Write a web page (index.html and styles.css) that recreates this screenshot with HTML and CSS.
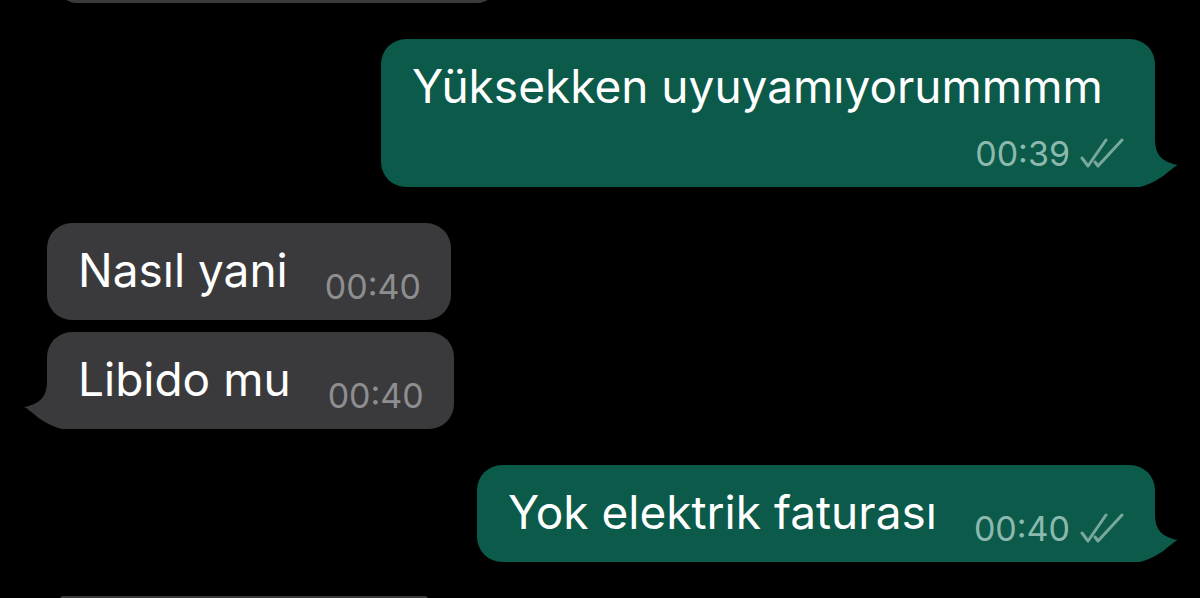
FILE: index.html
```html
<!DOCTYPE html>
<html lang="tr">

<head>
    <meta charset="UTF-8">
    <meta name="viewport" content="width=device-width, initial-scale=1.0">
    <title>Sohbet</title>
    <link rel="stylesheet" href="styles.css">
</head>

<body>
    <div class="chat">
        <!-- previous message, cut off at the top -->
        <div class="bubble in cut-top"></div>

        <div class="bubble out">
            <span class="text">Yüksekken uyuyamıyorummmm</span>
            <span class="meta">
                <span class="time">00:39</span>
                <svg class="ticks" viewBox="0 0 46 32" width="46" height="32">
                    <path d="M3 22 L9 30 L27 4" />
                    <path d="M16 26 L19 30 L43 4" />
                </svg>
            </span>
            <svg class="tail" viewBox="0 0 60 70" width="60" height="70">
                <path d="M0 0 H35 V22 C35 38 42 45 58 48 C49 52 44 63 20 70 H0 Z" />
            </svg>
        </div>

        <div class="bubble in">
            <span class="text">Nasıl yani</span>
            <span class="meta"><span class="time">00:40</span></span>
        </div>

        <div class="bubble in">
            <span class="text">Libido mu</span>
            <span class="meta"><span class="time">00:40</span></span>
            <svg class="tail" viewBox="0 0 60 70" width="60" height="70">
                <path d="M0 0 H35 V22 C35 38 42 45 58 48 C49 52 44 63 20 70 H0 Z" />
            </svg>
        </div>

        <div class="bubble out">
            <span class="text">Yok elektrik faturası</span>
            <span class="meta">
                <span class="time">00:40</span>
                <svg class="ticks" viewBox="0 0 46 32" width="46" height="32">
                    <path d="M3 22 L9 30 L27 4" />
                    <path d="M16 26 L19 30 L43 4" />
                </svg>
            </span>
            <svg class="tail" viewBox="0 0 60 70" width="60" height="70">
                <path d="M0 0 H35 V22 C35 38 42 45 58 48 C49 52 44 63 20 70 H0 Z" />
            </svg>
        </div>

        <!-- next message, cut off at the bottom -->
        <div class="bubble in cut-bottom"></div>
    </div>
</body>

</html>
```

FILE: styles.css
```css
html,
body {
    margin: 0;
    height: 598px;
    overflow: hidden;
    background-color: #000;
}

.chat {
    display: flex;
    flex-direction: column;
    padding: 0 45px 0 47px;
    font-family: Inter, "Noto Sans", sans-serif;
}

.bubble {
    position: relative;
    display: flex;
    flex-wrap: wrap;
    align-items: flex-start;
    column-gap: 37px;
    row-gap: 11px;
    max-width: 774px;
    box-sizing: border-box;
    padding: 19px 30px 13px 31px;
    border-radius: 25px;
    margin-top: 36px;
}

/* messages from the same side sit closer together */
.bubble.in + .bubble.in {
    margin-top: 12px;
}

.bubble.out {
    align-self: flex-end;
    background-color: #0b5a4a;
}

.bubble.in {
    align-self: flex-start;
    background-color: #3a3a3c;
}

.text {
    position: relative;
    z-index: 1;
    color: #fff;
    font-size: 46px;
    line-height: 56px;
    margin-bottom: 9px;
}

.meta {
    position: relative;
    z-index: 1;
    margin-left: auto;
    align-self: flex-end;
    display: flex;
    align-items: flex-end;
    white-space: nowrap;
}

.time {
    font-size: 34px;
    line-height: 40px;
}

.bubble.out .time {
    color: #8cb9ad;
}

.bubble.in .time {
    color: #8e8e90;
}

.ticks {
    margin-left: 9px;
    margin-bottom: 6px;
    fill: none;
    stroke: #78a89b;
    stroke-width: 3;
    stroke-linecap: round;
    stroke-linejoin: round;
}

.tail {
    position: absolute;
    bottom: 0;
}

.bubble.out .tail {
    right: -25px;
    fill: #0b5a4a;
}

.bubble.in .tail {
    left: -25px;
    transform: scaleX(-1);
    fill: #3a3a3c;
}

.cut-top {
    width: 440px;
    height: 40px;
    padding: 0;
    margin-top: -37px;
    margin-left: 10px;
}

.bubble.in.cut-bottom {
    width: 368px;
    height: 3px;
    padding: 0;
    border-radius: 25px 25px 0 0;
    margin-top: 34px;
    margin-left: 13px;
}
```
